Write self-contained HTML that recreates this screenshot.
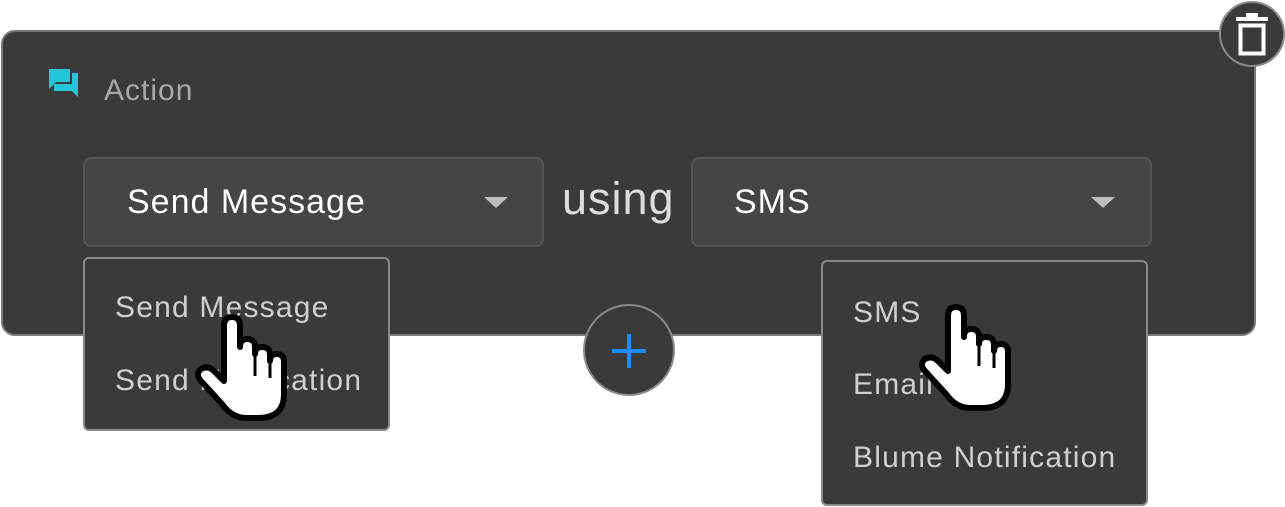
<!DOCTYPE html>
<html><head><meta charset="utf-8"><style>
*{margin:0;padding:0;box-sizing:border-box}
body{width:1285px;height:507px;background:#fff;position:relative;overflow:hidden;font-family:"Liberation Sans",sans-serif}
.card{position:absolute;left:1px;top:30px;width:1255px;height:306px;background:#3a3a3a;border:2px solid #7a7a7a;border-radius:14px}
.title{position:absolute;left:104px;top:74px;font-size:30px;letter-spacing:1px;color:#a8a8a8}
.sel{position:absolute;top:157px;height:90px;background:#454545;border:2px solid #555;border-radius:8px;color:#fff;font-size:34px;letter-spacing:1px;line-height:86px}
.tri{position:absolute;top:197px;width:0;height:0;border-left:12px solid transparent;border-right:12px solid transparent;border-top:11px solid #bdbdbd}
.using{position:absolute;left:562px;top:173px;font-size:45px;letter-spacing:1px;color:#ddd}
.menu{position:absolute;background:#3a3a3a;border:2px solid #8a8a8a;border-radius:6px;color:#d0d0d0;font-size:30px;letter-spacing:1.2px}
.menu div{position:absolute;left:30px;white-space:nowrap}
.circ{position:absolute;border-radius:50%;background:#3a3a3a;border:2px solid #8a8a8a}
</style></head><body>
<div class="card"></div>
<svg style="position:absolute;left:48px;top:68px" width="32" height="30" viewBox="0 0 32 30"><path d="M1,1 H22 V14 H8 L1,21 Z" fill="#26c6da"/><path d="M24,5 H30 V29 L24,23 H6 V16 H24 Z" fill="#26c6da"/></svg>
<div class="title">Action</div>
<div class="sel" style="left:83px;width:461px;padding-left:42px">Send Message</div>
<div class="tri" style="left:484px"></div>
<div class="using">using</div>
<div class="sel" style="left:691px;width:461px;padding-left:41px">SMS</div>
<div class="tri" style="left:1091px"></div>
<div class="circ" style="left:1219px;top:1px;width:66px;height:66px"></div>
<svg style="position:absolute;left:1234px;top:13px" width="36" height="44" viewBox="0 0 36 44"><rect x="2" y="4" width="32" height="4" fill="#fff"/><rect x="12" y="0" width="12" height="5" fill="#fff"/><rect x="6.5" y="12.5" width="23" height="28" fill="none" stroke="#fff" stroke-width="4"/></svg>
<div class="circ" style="left:583px;top:304px;width:92px;height:92px"></div>
<svg style="position:absolute;left:611px;top:333px" width="36" height="36"><path d="M18,1 V35 M1,18 H35" stroke="#1a8cff" stroke-width="4"/></svg>
<div class="menu" style="left:83px;top:257px;width:307px;height:174px"><div style="top:32px">Send Message</div><div style="top:105px">Send Notification</div></div>
<div class="menu" style="left:821px;top:260px;width:327px;height:246px"><div style="top:34px">SMS</div><div style="top:106px">Email</div><div style="top:179px">Blume Notification</div></div>
<svg style="position:absolute;left:190px;top:314px" width="100" height="112" viewBox="0 0 100 112"><path d="M34,12 Q34,3 42,3 Q50,3 50,12 L50,33 Q50,25 57,25 Q65,25 65,33 L65,40 Q65,33 72,33 Q80,33 80,41 L80,47 Q80,40 87,40 Q94,40 94,48 L94,80 Q94,104 68,104 L56,104 Q42,104 32,90 L11,67 Q5,60 11,55 Q18,51 24,57 L34,67 Z" fill="#fff" stroke="#000" stroke-width="6" stroke-linejoin="round"/><path d="M65,40 V62 M80,47 V64" stroke="#000" stroke-width="3"/></svg>
<svg style="position:absolute;left:914px;top:304px" width="100" height="112" viewBox="0 0 100 112"><path d="M34,12 Q34,3 42,3 Q50,3 50,12 L50,33 Q50,25 57,25 Q65,25 65,33 L65,40 Q65,33 72,33 Q80,33 80,41 L80,47 Q80,40 87,40 Q94,40 94,48 L94,80 Q94,104 68,104 L56,104 Q42,104 32,90 L11,67 Q5,60 11,55 Q18,51 24,57 L34,67 Z" fill="#fff" stroke="#000" stroke-width="6" stroke-linejoin="round"/><path d="M65,40 V62 M80,47 V64" stroke="#000" stroke-width="3"/></svg>
</body></html>
